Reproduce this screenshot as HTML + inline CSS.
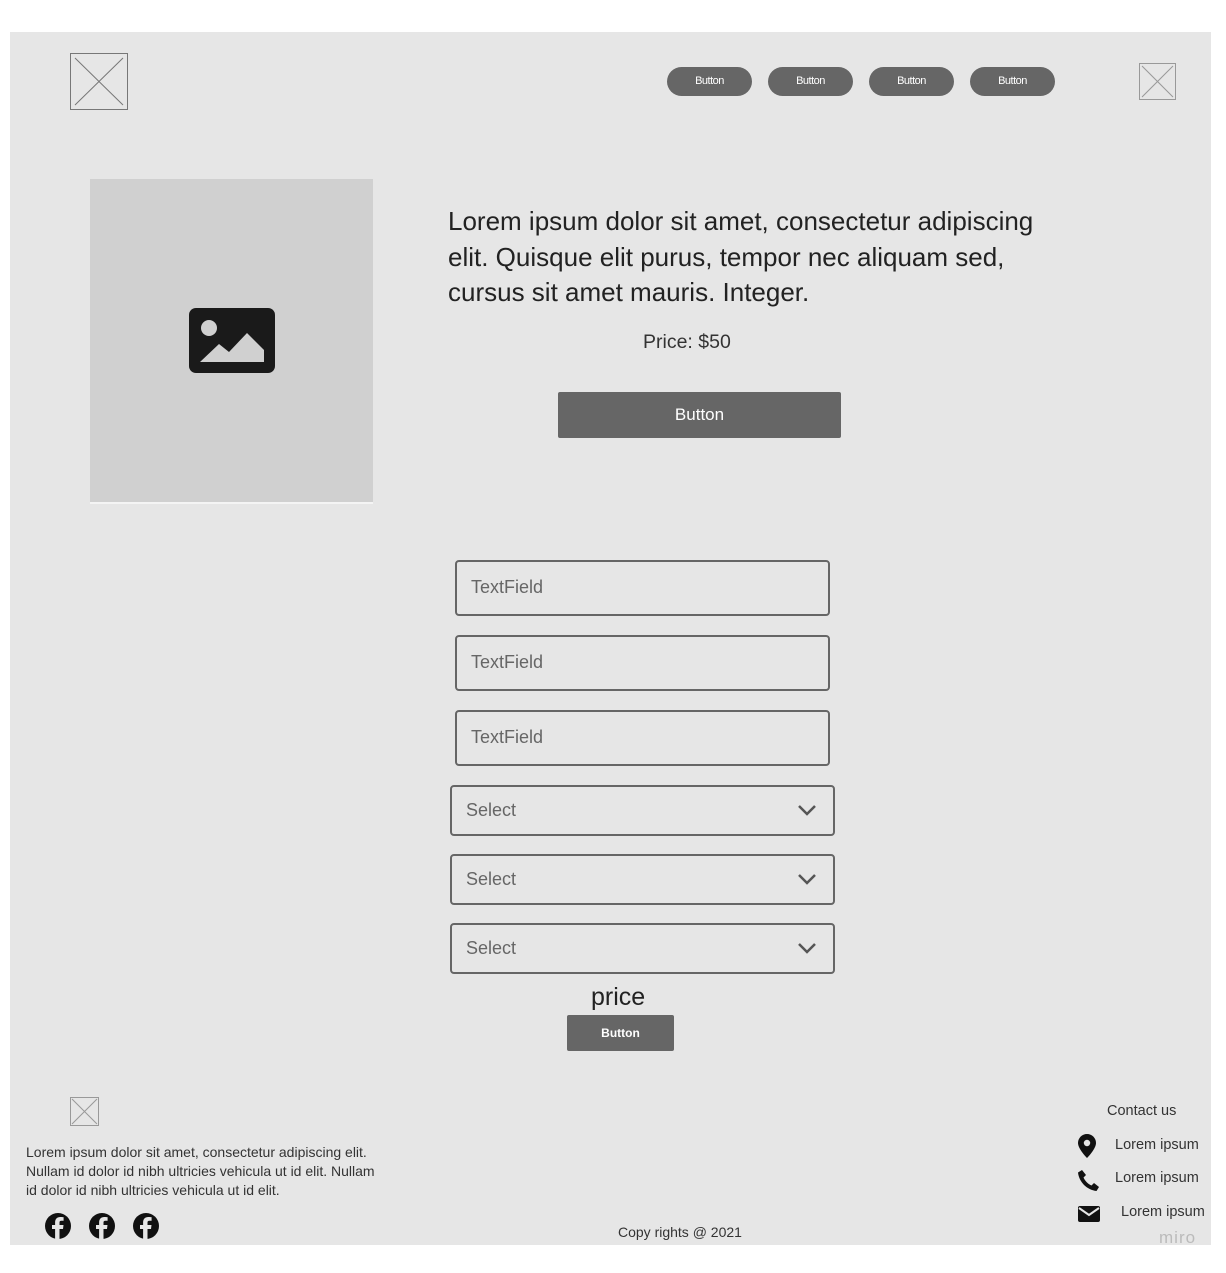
<!DOCTYPE html>
<html><head><meta charset="utf-8"><style>
*{margin:0;padding:0;box-sizing:border-box}
body{width:1226px;height:1273px;background:#fff;position:relative;font-family:"Liberation Sans",sans-serif;overflow:hidden}
.pg{position:absolute;left:10px;top:32px;width:1201px;height:1213px;background:#e6e6e6}
.a{position:absolute;white-space:nowrap}
.pill{position:absolute;top:67px;width:85px;height:29px;border-radius:15px;background:#666;color:#fff;font:11px "Liberation Sans",sans-serif;text-align:center;line-height:29px;letter-spacing:-0.5px}
.tf{position:absolute;left:455px;width:375px;height:56px;border:2.5px solid #666;border-radius:4px;font:18px "Liberation Sans",sans-serif;color:#666;padding-left:14px;line-height:51px}
.sel{position:absolute;left:450px;width:385px;height:51px;border:2.5px solid #666;border-radius:4px;font:18px "Liberation Sans",sans-serif;color:#666;padding-left:14px;line-height:46px}
.sel svg{position:absolute;right:16px;top:16px}
.ct{position:absolute;font-size:14.5px;color:#333;white-space:nowrap}
</style></head><body>
<div class="pg"></div>
<svg class="a" style="left:70px;top:53px" width="58" height="57"><rect x="0.5" y="0.5" width="57" height="56" fill="none" stroke="#777"/><path d="M5 5L53 52M53 5L5 52" stroke="#777"/></svg>
<div class="pill" style="left:667px">Button</div>
<div class="pill" style="left:768px">Button</div>
<div class="pill" style="left:869px">Button</div>
<div class="pill" style="left:970px">Button</div>
<svg class="a" style="left:1139px;top:63px" width="37" height="37"><rect x="0.5" y="0.5" width="36" height="36" fill="none" stroke="#999"/><path d="M3 3L34 34M34 3L3 34" stroke="#999"/></svg>
<div class="a" style="left:90px;top:179px;width:283px;height:325px;background:#d0d0d0;border-bottom:2px solid #f4f4f4"></div>
<svg class="a" style="left:189px;top:308px" width="86" height="65"><rect x="0" y="0" width="86" height="65" rx="7" fill="#1a1a1a"/><circle cx="20" cy="20" r="8" fill="#d0d0d0"/><path d="M11 54L30 36L40 44L58 25L75 42V54Z" fill="#d0d0d0"/></svg>
<div class="a" style="left:448px;top:204px;font-size:26px;line-height:35.5px;color:#222">Lorem ipsum dolor sit amet, consectetur adipiscing<br>elit. Quisque elit purus, tempor nec aliquam sed,<br>cursus sit amet mauris. Integer.</div>
<div class="a" style="left:643px;top:331px;font-size:19.5px;color:#333">Price: $50</div>
<div class="a" style="left:558px;top:392px;width:283px;height:46px;background:#666;border-radius:2px;color:#fff;font:17px 'Liberation Sans',sans-serif;text-align:center;line-height:46px">Button</div>
<div class="tf" style="top:560px">TextField</div>
<div class="tf" style="top:635px">TextField</div>
<div class="tf" style="top:710px">TextField</div>
<div class="sel" style="top:785px">Select<svg width="20" height="14"><path d="M2 3L10 11L18 3" fill="none" stroke="#555" stroke-width="2.5"/></svg></div>
<div class="sel" style="top:854px">Select<svg width="20" height="14"><path d="M2 3L10 11L18 3" fill="none" stroke="#555" stroke-width="2.5"/></svg></div>
<div class="sel" style="top:923px">Select<svg width="20" height="14"><path d="M2 3L10 11L18 3" fill="none" stroke="#555" stroke-width="2.5"/></svg></div>
<div class="a" style="left:591px;top:983px;font-size:25px;color:#222">price</div>
<div class="a" style="left:567px;top:1015px;width:107px;height:36px;background:#666;border-radius:2px;color:#fff;font:bold 12px 'Liberation Sans',sans-serif;text-align:center;line-height:36px">Button</div>
<svg class="a" style="left:70px;top:1097px" width="29" height="29"><rect x="0.5" y="0.5" width="28" height="28" fill="none" stroke="#999"/><path d="M2 2L27 27M27 2L2 27" stroke="#999"/></svg>
<div class="a" style="left:26px;top:1143px;font-size:14px;line-height:19px;color:#333">Lorem ipsum dolor sit amet, consectetur adipiscing elit.<br>Nullam id dolor id nibh ultricies vehicula ut id elit. Nullam<br>id dolor id nibh ultricies vehicula ut id elit.</div>
<svg class="a" style="left:44px;top:1213px" width="120" height="28">
<g id="f"><circle cx="14" cy="13" r="13" fill="#111"/><path d="M15.5 27V16h3.5l.5-4h-4V9.5c0-1.1.4-1.8 1.9-1.8h2.2V4.2c-.4 0-1.7-.2-3.2-.2-3.2 0-5.3 1.9-5.3 5.4V12H8v4h3.1v11z" fill="#e6e6e6"/></g>
<use href="#f" x="44"/><use href="#f" x="88"/></svg>
<div class="a" style="left:618px;top:1224px;font-size:14px;color:#333">Copy rights @ 2021</div>
<div class="ct" style="left:1107px;top:1103px">Contact us</div>
<svg class="a" style="left:1078px;top:1134px" width="18" height="24"><path d="M9 0C4 0 0 4 0 9c0 6 9 15 9 15s9-9 9-15C18 4 14 0 9 0z" fill="#111"/><circle cx="9" cy="9" r="3.2" fill="#e6e6e6"/></svg>
<div class="ct" style="left:1115px;top:1137px">Lorem ipsum</div>
<svg class="a" style="left:1078px;top:1170px" width="21" height="21"><path d="M4 0l4 5-2.5 2.5c1.5 3.5 4.5 6.5 8 8L16 13l5 4-2.5 4C9 20 1 12 0 2.5z" fill="#111"/></svg>
<div class="ct" style="left:1115px;top:1170px">Lorem ipsum</div>
<svg class="a" style="left:1078px;top:1206px" width="22" height="16"><rect width="22" height="16" rx="2" fill="#111"/><path d="M1 2L11 9L21 2" fill="none" stroke="#e6e6e6" stroke-width="2"/></svg>
<div class="ct" style="left:1121px;top:1204px">Lorem ipsum</div>
<div class="a" style="left:1159px;top:1228px;font-size:17px;color:#bbb;letter-spacing:1px">miro</div>
</body></html>
